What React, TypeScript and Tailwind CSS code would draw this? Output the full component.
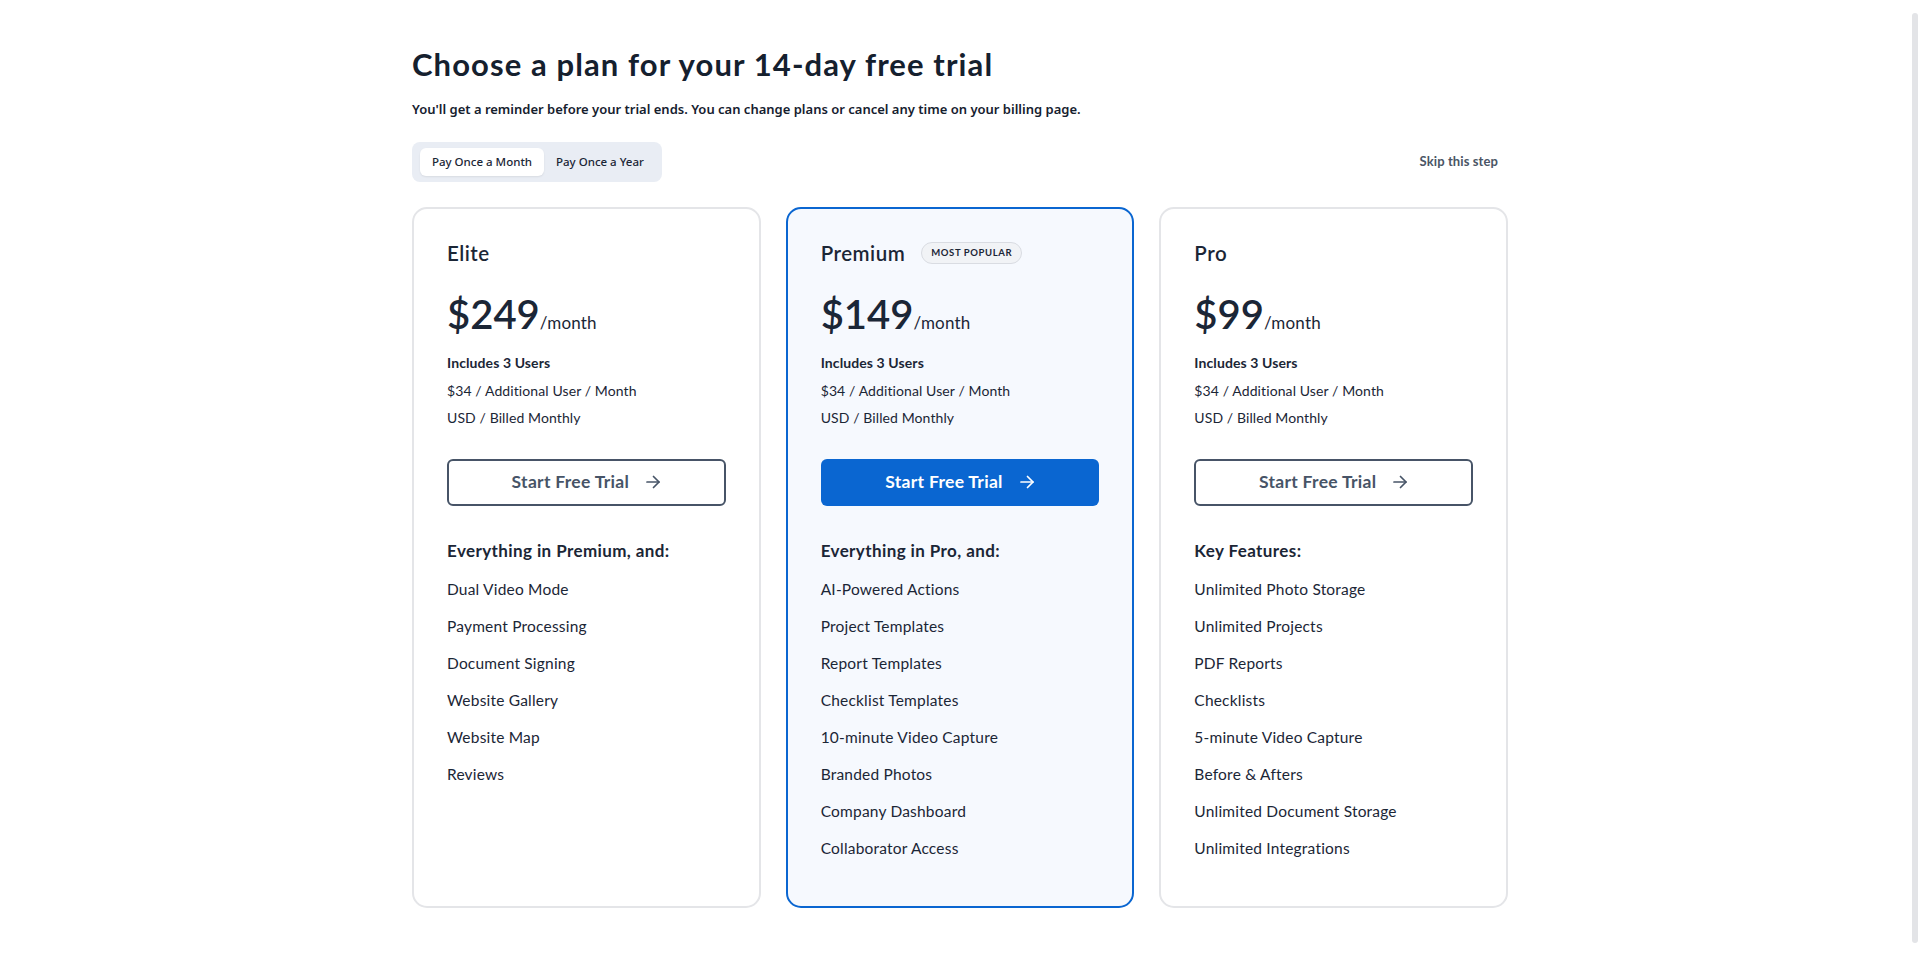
import React from "react";

type Plan = {
  name: string;
  price: string;
  popular?: boolean;
  heading: string;
  features: string[];
};

const plans: Plan[] = [
  {
    name: "Elite",
    price: "$249",
    heading: "Everything in Premium, and:",
    features: [
      "Dual Video Mode",
      "Payment Processing",
      "Document Signing",
      "Website Gallery",
      "Website Map",
      "Reviews",
    ],
  },
  {
    name: "Premium",
    price: "$149",
    popular: true,
    heading: "Everything in Pro, and:",
    features: [
      "AI-Powered Actions",
      "Project Templates",
      "Report Templates",
      "Checklist Templates",
      "10-minute Video Capture",
      "Branded Photos",
      "Company Dashboard",
      "Collaborator Access",
    ],
  },
  {
    name: "Pro",
    price: "$99",
    heading: "Key Features:",
    features: [
      "Unlimited Photo Storage",
      "Unlimited Projects",
      "PDF Reports",
      "Checklists",
      "5-minute Video Capture",
      "Before & Afters",
      "Unlimited Document Storage",
      "Unlimited Integrations",
    ],
  },
];

function Arrow({ className }: { className?: string }) {
  return (
    <svg
      viewBox="0 0 16 16"
      width="16"
      height="16"
      fill="none"
      stroke="currentColor"
      strokeWidth="1.7"
      strokeLinecap="round"
      strokeLinejoin="round"
      className={className}
    >
      <path d="M2 8h12" />
      <path d="M8.5 2.5L14 8l-5.5 5.5" />
    </svg>
  );
}

function PlanCard({ plan }: { plan: Plan }) {
  const card = plan.popular
    ? "border-[#0a66d1] bg-[#f6f9fe]"
    : "border-[#e4e5e8] bg-white";
  return (
    <div
      className={`flex flex-col rounded-[15px] border-2 px-[33px] pt-[30px] pb-[46px] ${card}`}
    >
      <div className="flex h-[28px] items-center gap-[16px]">
        <span className="text-[20.5px] font-semibold leading-[28px] tracking-[0.5px] text-[#1b2636]">
          {plan.name}
        </span>
        {plan.popular && (
          <span className="flex h-[22px] items-center rounded-full border border-[#d9dce2] bg-[#f1f3f6] px-[9px] text-[9.5px] font-bold uppercase tracking-[0.6px] text-[#1b2636]">
            Most Popular
          </span>
        )}
      </div>
      <div className="mt-[23px] flex items-baseline text-[#1b2636]">
        <span className="text-[40px] font-semibold leading-[48px]">
          {plan.price}
        </span>
        <span className="text-[17px] leading-[24px] tracking-[0.2px]">/month</span>
      </div>
      <div className="mt-[11px] flex flex-col text-[14px] leading-[27.5px] tracking-[0.1px] text-[#1b2636]">
        <span className="font-bold">Includes 3 Users</span>
        <span>$34 / Additional User / Month</span>
        <span>USD / Billed Monthly</span>
      </div>
      {plan.popular ? (
        <button className="mt-[27px] flex h-[47px] w-full items-center justify-center gap-[16px] rounded-[6px] bg-[#0a66d1] text-[17.5px] font-bold tracking-[0.3px] text-white">
          <span>Start Free Trial</span>
          <Arrow />
        </button>
      ) : (
        <button className="mt-[27px] flex h-[47px] w-full items-center justify-center gap-[16px] rounded-[6px] border-2 border-[#475467] bg-white text-[17.5px] font-bold tracking-[0.3px] text-[#475467]">
          <span>Start Free Trial</span>
          <Arrow />
        </button>
      )}
      <div className="mt-[33px] text-[17px] font-bold leading-[24px] tracking-[0.4px] text-[#1b2636]">
        {plan.heading}
      </div>
      <ul className="mt-[14px] flex flex-col gap-[13px] text-[15.5px] leading-[24px] tracking-[0.2px] text-[#1b2636]">
        {plan.features.map((f) => (
          <li key={f}>{f}</li>
        ))}
      </ul>
    </div>
  );
}

export default function App() {
  return (
    <div
      className="relative min-h-[956px] w-full bg-white"
      style={{ fontFamily: "Lato, 'Noto Sans', sans-serif" }}
    >
      <div className="mx-auto w-[1096px] pt-[46px]">
        <h1 className="text-[31px] font-bold leading-[36px] tracking-[1.1px] text-[#15202e]">
          Choose a plan for your 14-day free trial
        </h1>
        <p
          className="mt-[17px] text-[13px] font-semibold leading-[20px] text-[#15202e]"
          style={{ fontFamily: "'Noto Sans', sans-serif" }}
        >
          You'll get a reminder before your trial ends. You can change plans or
          cancel any time on your billing page.
        </p>
        <div className="mt-[23px] flex items-center justify-between">
          <div
            className="flex h-[40px] w-[250px] items-center gap-[12px] rounded-[8px] bg-[#e9edf4] px-[8px]"
            style={{ fontFamily: "'Noto Sans', sans-serif" }}
          >
            <button className="flex h-[28px] w-[124px] items-center justify-center rounded-[6px] bg-white text-[11.5px] font-medium text-[#1b2636] shadow-[0_1px_2px_rgba(0,0,0,0.08)]">
              Pay Once a Month
            </button>
            <button className="flex h-[28px] items-center text-[11.5px] font-medium text-[#1b2636]">
              Pay Once a Year
            </button>
          </div>
          <span className="pr-[10px] text-[13px] font-bold tracking-[0.1px] text-[#4a5565]">
            Skip this step
          </span>
        </div>
        <div className="mt-[25px] grid grid-cols-3 gap-[25px]">
          {plans.map((p) => (
            <PlanCard key={p.name} plan={p} />
          ))}
        </div>
      </div>
      <div className="pointer-events-none absolute right-[2px] top-[13px] h-[930px] w-[6px] rounded-full bg-[#e3e4e7]" />
    </div>
  );
}
